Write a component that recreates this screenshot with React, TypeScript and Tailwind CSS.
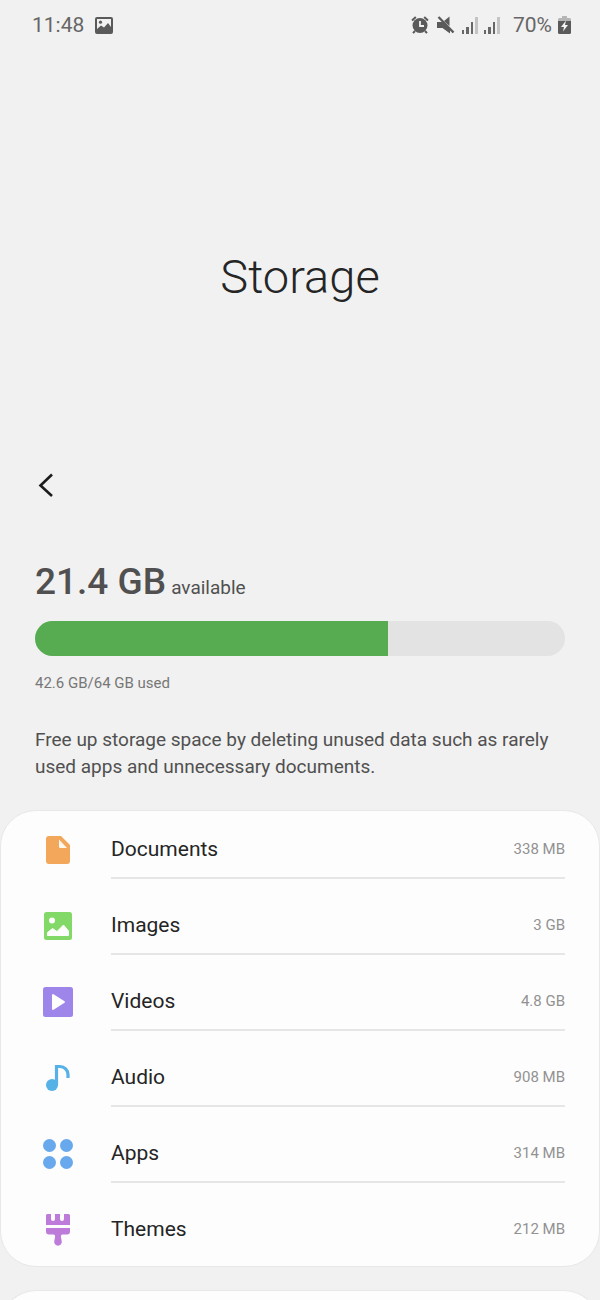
import React from "react";

interface Category {
  name: string;
  size: string;
  icon: React.ReactNode;
}

const USED_GB = 42.6;
const TOTAL_GB = 64;

const categories: Category[] = [
  { name: "Documents", size: "338 MB", icon: <DocumentIcon /> },
  { name: "Images", size: "3 GB", icon: <ImageIcon /> },
  { name: "Videos", size: "4.8 GB", icon: <VideoIcon /> },
  { name: "Audio", size: "908 MB", icon: <AudioIcon /> },
  { name: "Apps", size: "314 MB", icon: <AppsIcon /> },
  { name: "Themes", size: "212 MB", icon: <ThemesIcon /> },
];

export default function App() {
  return (
    <div className="flex min-h-screen flex-col bg-[#f1f1f1] font-['Roboto',sans-serif] text-[#252525]">
      <StatusBar />

      <header>
        <h1 className="pt-[199px] text-center text-[47px] font-light leading-[56px]">Storage</h1>
        <button
          type="button"
          aria-label="Back"
          className="ml-[26px] mt-40 flex h-10 w-10 items-center justify-center"
        >
          <svg width="16" height="24" viewBox="0 0 16 24" fill="none" stroke="#1c1c1c" strokeWidth="2.6">
            <path d="M14 1.500 2.500 12.500l11.500 10.500" />
          </svg>
        </button>
      </header>

      <Usage />

      <main className="mt-[30px] rounded-[36px] border border-[#e8e8e8] bg-[#fdfdfd] pb-[7px]">
        <ul>
          {categories.map((c) => (
            <CategoryRow key={c.name} category={c} />
          ))}
        </ul>
      </main>

      {/* Next card, starts below the fold */}
      <div className="mt-[23px] flex-1 overflow-hidden">
        <section className="h-20 -mb-20 rounded-t-[36px] border border-b-0 border-[#e8e8e8] bg-[#fdfdfd]" />
      </div>
    </div>
  );
}

function Usage() {
  return (
    <section className="mt-[54px] px-[35px] text-[#505050]">
      <p className="flex items-baseline gap-[5px]">
        <span className="text-[37px] font-medium leading-[46px]">21.4 GB</span>
        <span className="text-[19px] leading-[27px]">available</span>
      </p>
      <div
        role="progressbar"
        aria-label="Storage used"
        aria-valuenow={USED_GB}
        aria-valuemax={TOTAL_GB}
        className="mt-4 h-[35px] overflow-hidden rounded-full bg-[#e3e3e3]"
      >
        <div className="h-full bg-[#57ac52]" style={{ width: `${(USED_GB / TOTAL_GB) * 100}%` }} />
      </div>
      <p className="mt-[17px] text-[15px] leading-5 text-[#777777]">42.6 GB/64 GB used</p>
      <p className="mt-[33px] text-[19px] leading-[27px]">
        Free up storage space by deleting unused data such as rarely used apps and unnecessary documents.
      </p>
    </section>
  );
}

function CategoryRow({ category }: { category: Category }) {
  return (
    <li className="group pt-[18px] first:pt-[10px]">
      <button type="button" className="flex h-[58px] w-full items-center pl-[41px] pr-[34px] text-left">
        <span className="flex h-8 w-8 shrink-0 items-center justify-center">{category.icon}</span>
        <span className="ml-[37px] flex h-full flex-1 items-center justify-between border-b-2 border-[#e6e6e6] group-last:border-transparent">
          <span className="text-[21px] leading-7">{category.name}</span>
          <span className="text-[15px] leading-5 text-[#929292]">{category.size}</span>
        </span>
      </button>
    </li>
  );
}

function StatusBar() {
  return (
    <div className="flex h-[50px] items-center justify-between pl-8 pr-[29px] text-[21px] leading-7 text-[#666666]">
      <div className="flex items-center gap-[11px]">
        <span>11:48</span>
        <svg width="18" height="17" viewBox="0 0 18 17" fill="#5a5a5a">
          <path
            fillRule="evenodd"
            d="M2 0h14a2 2 0 0 1 2 2v13a2 2 0 0 1-2 2H2a2 2 0 0 1-2-2V2a2 2 0 0 1 2-2Zm0 2v10l4-3.500 3 2L13 6l3 4V2Z"
          />
          <circle cx="5.500" cy="5.200" r="1.600" />
        </svg>
      </div>
      <div className="flex items-center">
        <AlarmIcon />
        <MuteIcon />
        <SignalIcon />
        <SignalIcon />
        <span className="ml-[7px]">70%</span>
        <BatteryIcon />
      </div>
    </div>
  );
}

function AlarmIcon() {
  return (
    <svg className="mr-2" width="18" height="18" viewBox="0 0 18 18" fill="none">
      <circle cx="9" cy="9.500" r="7.500" fill="#5a5a5a" />
      <path d="M1 4.500 4.800 1M17 4.500 13.200 1M4 15l-2 2.200M14 15l2 2.200" stroke="#5a5a5a" strokeWidth="2" />
      <path d="M9 5v5h4" stroke="#f1f1f1" strokeWidth="1.800" />
    </svg>
  );
}

function MuteIcon() {
  return (
    <svg className="mr-[7px]" width="18" height="18" viewBox="0 0 18 18" fill="#5a5a5a">
      <path d="M0 6h5.500L13 13v4.500L5.500 12H0ZM7 5l5.500-4.500v9.500Z" />
      <path d="m1.500 1 15 15.500" stroke="#5a5a5a" strokeWidth="2.400" />
    </svg>
  );
}

function SignalIcon() {
  return (
    <svg className="mr-[5px]" width="17" height="18" viewBox="0 0 17 18" fill="#686868">
      <path d="M0 14h2v4H0zM4 11h3v7H4zM9 6h2v12H9z" />
      <path d="M13 1h3v17h-3z" fill="#c4c4c4" />
    </svg>
  );
}

function BatteryIcon() {
  return (
    <svg className="ml-1.5" width="13" height="18" viewBox="0 0 13 18">
      <path d="M4 0h5v2h2.500a1.500 1.500 0 0 1 1.500 1.500V6H0V3.500A1.500 1.500 0 0 1 1.500 2H4Z" fill="#b5b5b5" />
      <path d="M0 5h13v11.500a1.500 1.500 0 0 1-1.500 1.500h-10A1.500 1.500 0 0 1 0 16.500Z" fill="#5a5a5a" />
      <path d="M8 4.500 3 11h3l-1 4.500L10 9H7Z" fill="#f5f5f5" />
    </svg>
  );
}

function DocumentIcon() {
  return (
    <svg width="24" height="28" viewBox="0 0 24 28">
      <path
        d="M3 0h12l9 9v16a3 3 0 0 1-3 3H3a3 3 0 0 1-3-3V3a3 3 0 0 1 3-3Z"
        fill="#f3a75b"
      />
      <path d="M13 3.500 21 12h-6.500a1.500 1.500 0 0 1-1.500-1.500Z" fill="#fff8ef" />
    </svg>
  );
}

function ImageIcon() {
  return (
    <svg width="28" height="28" viewBox="0 0 28 28">
      <rect width="28" height="28" rx="2.500" fill="#82d968" />
      <circle cx="8" cy="8.500" r="3" fill="#fdfdfd" />
      <path d="M3.500 23.500v-3l5-4 4.500 3 6.500-6.500 5 6v4.500Z" fill="#fdfdfd" stroke="#fdfdfd" strokeLinejoin="round" />
    </svg>
  );
}

function VideoIcon() {
  return (
    <svg width="30" height="30" viewBox="0 0 30 30">
      <rect width="30" height="30" rx="2.500" fill="#9d85ea" />
      <path d="M10 8v14l11-7Z" fill="#fdfdfd" stroke="#fdfdfd" strokeWidth="2" strokeLinejoin="round" />
    </svg>
  );
}

function AudioIcon() {
  return (
    <svg width="24" height="28" viewBox="0 0 24 28" fill="none">
      <circle cx="6" cy="21" r="6" fill="#55b1e6" />
      <path d="M10.500 21V2.500h3.500a8 8 0 0 1 8 8V14" stroke="#55b1e6" strokeWidth="3.200" />
    </svg>
  );
}

function AppsIcon() {
  return (
    <svg width="30" height="30" viewBox="0 0 30 30" fill="#68a8ec">
      <circle cx="6.500" cy="6.500" r="6.500" />
      <circle cx="23.500" cy="6.500" r="6.500" />
      <circle cx="6.500" cy="23.500" r="6.500" />
      <circle cx="23.500" cy="23.500" r="6.500" />
    </svg>
  );
}

function ThemesIcon() {
  return (
    <svg width="24" height="32" viewBox="0 0 24 32" fill="#bd7bda">
      <path d="M1.500 0H5v5a2 2 0 0 0 4 0V0h5v5a2 2 0 0 0 4 0V0h4.500A1.500 1.500 0 0 1 24 1.500V11H0V1.500A1.500 1.500 0 0 1 1.500 0Z" />
      <path d="M0 14h24v3.500a3 3 0 0 1-3 3h-4.500q-2 0-1.500 3l.7 3.500a3.800 3.800 0 1 1-7.400 0l.7-3.500q.5-3-1.500-3H3a3 3 0 0 1-3-3Z" />
    </svg>
  );
}
